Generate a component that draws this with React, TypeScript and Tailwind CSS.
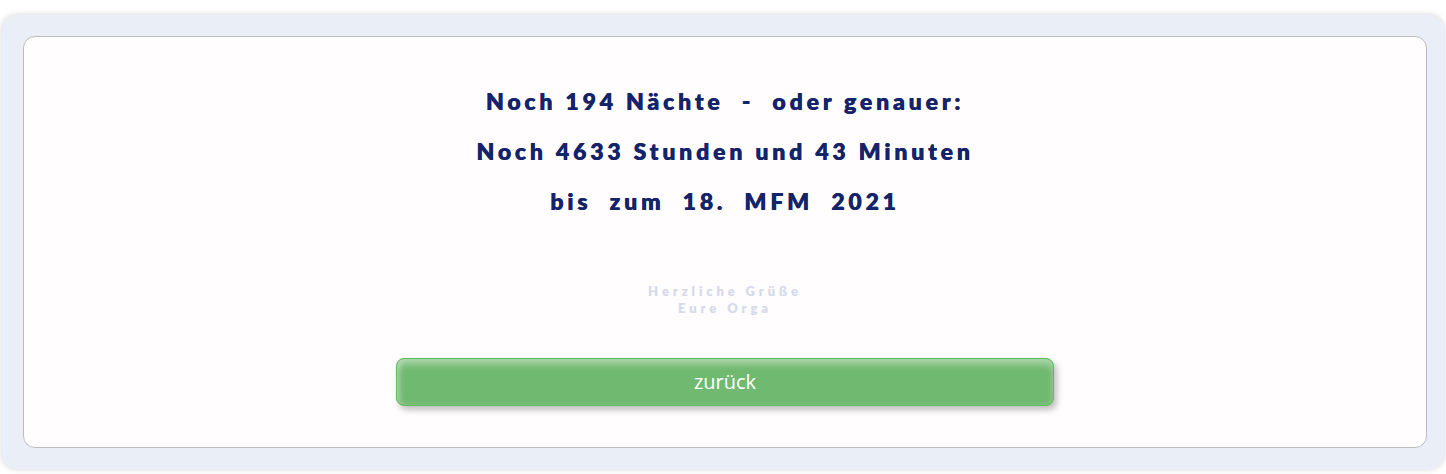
import React from 'react';

const Countdown: React.FC = () => {
  return (
    <div className="w-full h-[474px] bg-white pt-[15px] pl-[2px] pr-[2px] pb-[5px]">
      <div className="h-full rounded-[15px] bg-[#eaeef6] shadow-[0_0_6px_rgba(0,0,0,0.18)] pt-[21px] pl-[21px] pr-[17px] pb-[21px]">
        <div className="h-full rounded-[12px] border border-[#bdbdbd] bg-[#fffdfd] flex flex-col items-center pt-[52px]">
          <div className="flex flex-col items-center gap-[26px] font-['Lato',sans-serif] font-extrabold text-[23px] leading-[24px] tracking-[3.8px] text-[#15246a] [text-shadow:0.3px_0_0_#15246a]">
            <p>Noch 194 Nächte &nbsp;-&nbsp; oder genauer:</p>
            <p>Noch 4633 Stunden und 43 Minuten</p>
            <p>bis &nbsp;zum &nbsp;18. &nbsp;MFM &nbsp;2021</p>
          </div>
          <div className="mt-[70px] flex flex-col items-center font-['Lato',sans-serif] font-extrabold text-[13px] leading-[17px] tracking-[3.9px] text-[#d5daea]">
            <p>Herzliche Grüße</p>
            <p>Eure Orga</p>
          </div>
          <button className="mt-[41px] w-[658px] h-[48px] rounded-[8px] border border-[#5cbf5c] bg-[#70b970] shadow-[inset_0_6px_6px_rgba(255,255,255,0.35),inset_4px_0_5px_rgba(255,255,255,0.2),3px_4px_6px_rgba(0,0,0,0.25)] text-white font-['Open_Sans',sans-serif] text-[20px]">
            zurück
          </button>
        </div>
      </div>
    </div>
  );
};

export default function App() {
  return <Countdown />;
}
